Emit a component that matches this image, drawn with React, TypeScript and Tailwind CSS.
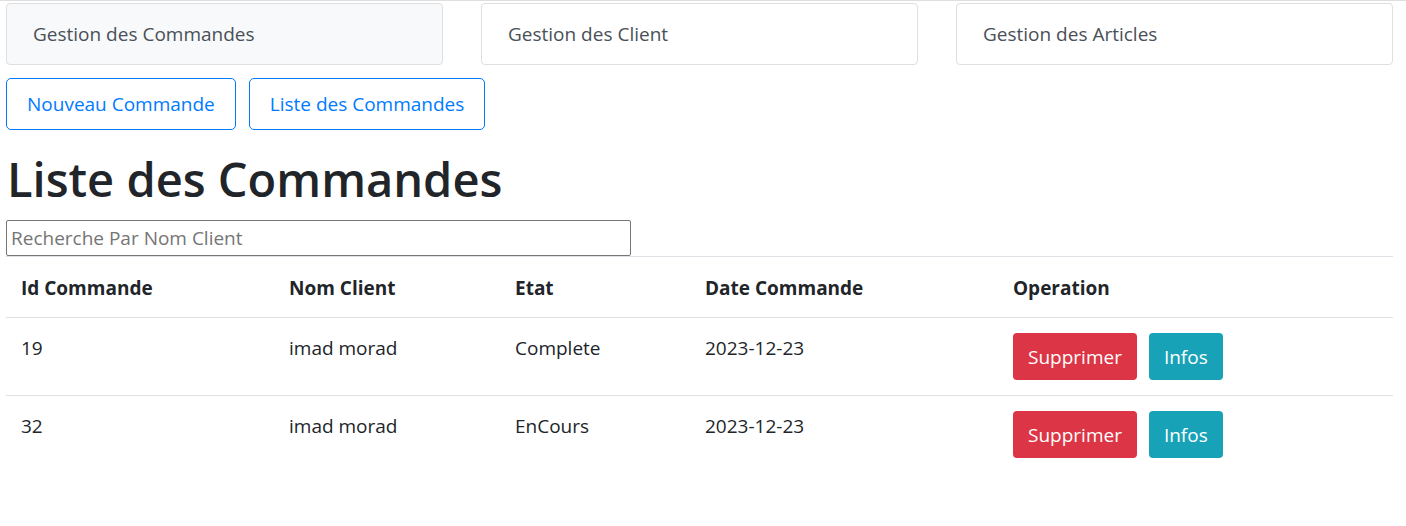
const sections = ["Gestion des Commandes", "Gestion des Client", "Gestion des Articles"];

const commandes = [
  { id: 19, client: "imad morad", etat: "Complete", date: "2023-12-23" },
  { id: 32, client: "imad morad", etat: "EnCours", date: "2023-12-23" },
];

function App() {
  return (
    <div className="min-h-screen bg-white text-[#212529] font-['Open_Sans',sans-serif]">
      <div className="h-px bg-[#dedede]" />
      <div className="ml-[6px] w-[1387px] pt-[2px]">
        <div className="grid grid-cols-3 gap-[38px]">
          {sections.map((s, i) => (
            <div
              key={s}
              className={
                i === 0
                  ? "h-[62px] flex items-center pt-[1px] px-[26px] border border-[#dfdfdf] rounded-[4px] bg-[#f8f9fa] text-[19px] text-[#495057]"
                  : "h-[62px] flex items-center pt-[1px] px-[26px] border border-[#dfdfdf] rounded-[4px] bg-white text-[19px] text-[#495057]"
              }
            >
              {s}
            </div>
          ))}
        </div>

        <div className="flex gap-[13px] mt-[13px]">
          <button className="h-[52px] px-[20px] pt-[1px] border border-[#007bff] rounded-[5px] text-[19px] text-[#007bff]">
            Nouveau Commande
          </button>
          <button className="h-[52px] px-[20px] pt-[1px] border border-[#007bff] rounded-[5px] text-[19px] text-[#007bff]">
            Liste des Commandes
          </button>
        </div>

        <h1 className="text-[47px] leading-[60px] font-semibold mt-[19px] mb-[11px] ml-[1px]">Liste des Commandes</h1>

        <input
          className="block w-[625px] h-[36px] px-[4px] border border-[#767676] rounded-[2px] text-[19px] placeholder:text-[#757575] outline-none"
          placeholder="Recherche Par Nom Client"
        />

        <table className="w-full text-[19px] leading-[30px] border-collapse">
          <thead>
            <tr className="text-left">
              <th className="w-[268px] px-[15px] pt-[16px] pb-[14px] border-t border-b border-[#dee2e6] font-bold">Id Commande</th>
              <th className="w-[226px] px-[15px] pt-[16px] pb-[14px] border-t border-b border-[#dee2e6] font-bold">Nom Client</th>
              <th className="w-[190px] px-[15px] pt-[16px] pb-[14px] border-t border-b border-[#dee2e6] font-bold">Etat</th>
              <th className="w-[308px] px-[15px] pt-[16px] pb-[14px] border-t border-b border-[#dee2e6] font-bold">Date Commande</th>
              <th className="px-[15px] pt-[16px] pb-[14px] border-t border-b border-[#dee2e6] font-bold">Operation</th>
            </tr>
          </thead>
          <tbody>
            {commandes.map((c) => (
              <tr key={c.id} className="align-top">
                <td className="px-[15px] py-[15px] border-t border-[#dee2e6]">{c.id}</td>
                <td className="px-[15px] py-[15px] border-t border-[#dee2e6]">{c.client}</td>
                <td className="px-[15px] py-[15px] border-t border-[#dee2e6]">{c.etat}</td>
                <td className="px-[15px] py-[15px] border-t border-[#dee2e6]">{c.date}</td>
                <td className="px-[15px] py-[15px] border-t border-[#dee2e6]">
                  <div className="flex gap-[12px]">
                    <button className="h-[47px] px-[15px] pt-[1px] rounded-[4px] bg-[#dc3545] text-white">Supprimer</button>
                    <button className="h-[47px] px-[15px] pt-[1px] rounded-[4px] bg-[#17a2b8] text-white">Infos</button>
                  </div>
                </td>
              </tr>
            ))}
          </tbody>
        </table>
      </div>
    </div>
  );
}

export default App;
